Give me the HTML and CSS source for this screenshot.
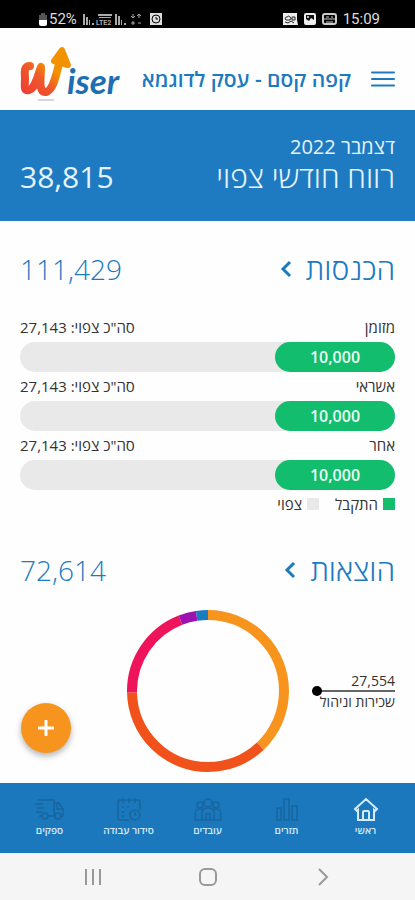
FILE: index.html
```html
<!DOCTYPE html>
<html lang="he" dir="rtl">
<head>
    <meta charset="UTF-8">
    <meta name="viewport" content="width=device-width, initial-scale=1.0">
    <title>Wiser</title>
    <link rel="stylesheet" href="styles.css">
</head>
<body>
    <div class="status-bar">
        <div class="status-group">
            <svg width="10" height="13" viewBox="0 0 10 13"><path d="M3 0h4v2h2v5H1V2h2z" fill="#555"/><path d="M1 7h8v4q0 2-2 2H3q-2 0-2-2z" fill="#fff"/></svg>
            <span>52%</span>
            <svg class="status-signal" width="62" height="14" viewBox="0 0 62 14">
                <g fill="#aaa">
                    <path d="M0 2h2v11H0zM3 5h2v8H3zM6 8h1v5H6zM9 11h2v2H9z"/>
                    <path d="M15 2h14v2H15zM16 5h12v1H16z"/>
                    <path d="M32 2h2v11h-2zM35 4h2v9h-2zM38 8h1v5h-1zM41 11h2v2h-2z"/>
                </g>
                <text x="13" y="13" class="status-tiny">LTE2</text>
                <path d="M50 2v4M48 4l2 2 2-2M56 6V2M54 4l2-2 2 2M50 9v4M48 11h4M55 11h3" stroke="#aaa" fill="none"/>
            </svg>
            <svg class="status-alarm" width="12" height="12" viewBox="0 0 12 12"><path d="M0 0h12v12H0z" fill="#ddd"/><circle cx="6" cy="6" r="4" fill="none" stroke="#000"/><path d="M6 4v2h2" stroke="#000" fill="none"/></svg>
        </div>
        <div class="status-group">
            <svg width="15" height="12" viewBox="0 0 15 12"><path d="M0 0h14v7l1 5H0z" fill="#eee"/><path d="M3 7q-2-3 1-3 2-2 3 0 2 1 0 3zM9 4h3v3H9zM2 9l3 1 3-2 3 2" fill="none" stroke="#222"/></svg>
            <svg width="12" height="12" viewBox="0 0 12 12"><rect width="12" height="12" rx="2" fill="#eee"/><path d="M2 2h8v5L7 5 5 8 2 6z" fill="#111"/><circle cx="4" cy="4" r="1" fill="#eee"/></svg>
            <svg width="15" height="12" viewBox="0 0 15 12"><rect x="1" y="1" width="13" height="10" rx="2" fill="none" stroke="#ccc" stroke-width="2"/><path d="M2 6h11M4 4h3M9 4h2M4 9h7" stroke="#ccc"/></svg>
            <span>15:09</span>
        </div>
    </div>

    <header class="header">
        <button class="menu-button" aria-label="תפריט">
            <svg width="24" height="16" viewBox="0 0 24 16"><path d="M1 1.5h22M1 8h22M1 14.5h22" stroke="#1c7abf" stroke-width="2" stroke-linecap="round"/></svg>
        </button>
        <h1 class="business">קפה קסם - עסק לדוגמא</h1>
        <a class="logo" href="#" aria-label="Wiser">
            <svg width="102" height="56" viewBox="0 0 102 56">
                <defs>
                    <linearGradient id="flame" x1="0" y1="1" x2="1" y2="0">
                        <stop offset="0" stop-color="#ee4035"/>
                        <stop offset="0.45" stop-color="#f05a28"/>
                        <stop offset="0.75" stop-color="#f39200"/>
                    </linearGradient>
                </defs>
                <path d="M18 54h16" stroke="#d6d6d6" stroke-width="2"/>
                <path d="M10 20C3 20 5 27 5 33C5 40 3 45 9 44C16 42 18 28 21 21C21 32 18 47 26 46C34 44 36 28 40 14" fill="none" stroke="url(#flame)" stroke-width="8" stroke-linecap="round" stroke-linejoin="round"/>
                <path d="M42 4L34 15L48 19Z" fill="#f39200" stroke="#f39200" stroke-width="6" stroke-linejoin="round"/>
                <text x="47" y="48" class="logo-text">iser</text>
            </svg>
        </a>
    </header>

    <section class="profit">
        <p class="profit-month">דצמבר 2022</p>
        <div class="profit-row">
            <h2>רווח חודשי צפוי</h2>
            <span>38,815</span>
        </div>
    </section>

    <main class="content">
        <section class="income">
            <div class="section-title">
                <h2><a href="#">הכנסות
                    <svg width="12" height="18" viewBox="0 0 12 18"><path d="M10 2L3 9l7 7" fill="none" stroke="#1c7abf" stroke-width="3"/></svg>
                </a></h2>
                <span>111,429</span>
            </div>
            <div class="source">
                <div class="source-label"><span>מזומן</span><span>סה"כ צפוי: 27,143</span></div>
                <div class="bar"><div class="bar-fill" style="width: 32%">10,000</div></div>
            </div>
            <div class="source">
                <div class="source-label"><span>אשראי</span><span>סה"כ צפוי: 27,143</span></div>
                <div class="bar"><div class="bar-fill" style="width: 32%">10,000</div></div>
            </div>
            <div class="source">
                <div class="source-label"><span>אחר</span><span>סה"כ צפוי: 27,143</span></div>
                <div class="bar"><div class="bar-fill" style="width: 32%">10,000</div></div>
            </div>
            <div class="legend">
                <span class="legend-item received">התקבל</span>
                <span class="legend-item expected">צפוי</span>
            </div>
        </section>

        <section class="expenses">
            <div class="section-title">
                <h2><a href="#">הוצאות
                    <svg width="12" height="18" viewBox="0 0 12 18"><path d="M10 2L3 9l7 7" fill="none" stroke="#1c7abf" stroke-width="3"/></svg>
                </a></h2>
                <span>72,614</span>
            </div>
            <div class="chart">
                <div class="callout">
                    <span>27,554</span>
                    <div class="callout-line"></div>
                    <span>שכירות וניהול</span>
                </div>
                <svg class="donut" width="162" height="162" viewBox="0 0 162 162">
                    <g fill="none" stroke-width="10" transform="rotate(-90 81 81)">
                        <circle cx="81" cy="81" r="76" pathLength="1000" stroke="#f7941d" stroke-dasharray="379 621"/>
                        <circle cx="81" cy="81" r="76" pathLength="1000" stroke="#f1511b" stroke-dasharray="368 632" stroke-dashoffset="-379"/>
                        <circle cx="81" cy="81" r="76" pathLength="1000" stroke="#ed145b" stroke-dasharray="194 806" stroke-dashoffset="-747"/>
                        <circle cx="81" cy="81" r="76" pathLength="1000" stroke="#9c12b0" stroke-dasharray="35 965" stroke-dashoffset="-941"/>
                        <circle cx="81" cy="81" r="76" pathLength="1000" stroke="#1c7abf" stroke-dasharray="24 976" stroke-dashoffset="-976"/>
                    </g>
                </svg>
            </div>
        </section>
    </main>

    <div class="bottom">
        <button class="add-button" aria-label="הוספה">
            <svg width="16" height="16" viewBox="0 0 16 16"><path d="M8 1v14M1 8h14" stroke="#fff" stroke-width="3" stroke-linecap="round"/></svg>
        </button>
        <nav class="tabs">
            <a class="tab active" href="#">
                <svg width="26" height="26" viewBox="0 0 26 26"><path d="M2 13L13 3l11 10-2 2-1-1v10H5V14l-1 1zM10 24v-8q0-1 1-1h4q1 0 1 1v8"/></svg>
                ראשי
            </a>
            <a class="tab" href="#">
                <svg width="26" height="26" viewBox="0 0 26 26"><path d="M3 12h4v12H3zM10 3h5v21h-5zM18 10h5v14h-5z"/></svg>
                תזרים
            </a>
            <a class="tab" href="#">
                <svg width="28" height="26" viewBox="0 0 28 26"><circle cx="14" cy="7" r="4"/><circle cx="6" cy="9" r="3"/><circle cx="22" cy="9" r="3"/><path d="M8 24v-7q0-5 6-5t6 5v7zM8 24H1v-6q0-5 5-5 2 0 3 1M20 24h7v-6q0-5-5-5-2 0-3 1M12 24v-6h4v6"/></svg>
                עובדים
            </a>
            <a class="tab" href="#">
                <svg width="26" height="26" viewBox="0 0 26 26"><path d="M13 24H4q-2 0-2-2V6q0-2 2-2h18q2 0 2 2v8M7 2v5M13 2v5M19 2v5M6 11h2M11 11h2M6 16h2M6 20h2"/><circle cx="19" cy="19" r="5"/><path d="M19 16v3h2"/></svg>
                סידור עבודה
            </a>
            <a class="tab" href="#">
                <svg width="30" height="26" viewBox="0 0 30 26"><path d="M3 4h16v16h-5M19 7h5l4 6v7h-2M20 20h-1M22 8v5h6M7 20H4M0 8h8M2 12h7M1 16h6"/><circle cx="10" cy="20" r="3"/><circle cx="23" cy="20" r="3"/></svg>
                ספקים
            </a>
        </nav>
    </div>

    <div class="system-nav">
        <button aria-label="אחרונים"><svg width="18" height="18" viewBox="0 0 18 18"><path d="M2 1v16M9 1v16M16 1v16"/></svg></button>
        <button aria-label="בית"><svg width="18" height="18" viewBox="0 0 18 18"><rect x="1" y="1" width="16" height="16" rx="5"/></svg></button>
        <button aria-label="חזרה"><svg width="18" height="18" viewBox="0 0 18 18"><path d="M5 1l8 8-8 8"/></svg></button>
    </div>
</body>
</html>
```

FILE: styles.css
```css
* {
    box-sizing: border-box;
    margin: 0;
    padding: 0;
}

body {
    display: flex;
    flex-direction: column;
    min-height: 100vh;
    background-color: #fefefe;
    color: #333;
    font-family: 'Open Sans', 'Liberation Sans', sans-serif;
}

svg {
    display: block;
}

a {
    color: inherit;
    text-decoration: none;
}

button {
    border: none;
    background: none;
    cursor: pointer;
}

.status-bar {
    direction: ltr;
    display: flex;
    justify-content: space-between;
    height: 28px;
    padding: 10px 35px 0 38px;
    background-color: #000;
    color: #ddd;
    font-family: Roboto, sans-serif;
    font-size: 15px;
    line-height: 18px;
}

.status-group {
    display: flex;
    align-items: center;
    height: 18px;
    gap: 6px;
}

.status-group:first-child {
    gap: 1px;
}

.status-signal {
    margin-left: 5px;
}

.status-alarm {
    margin-left: 4px;
}

.status-tiny {
    font-size: 7px;
    font-weight: bold;
    fill: #aaa;
}

.header {
    display: flex;
    align-items: center;
    height: 82px;
    padding: 0 20px;
    color: #1c7abf;
}

.menu-button {
    margin-top: 20px;
}

.business {
    margin: 20px 20px 0 0;
    font-size: 21px;
    font-weight: 600;
    line-height: 28px;
    white-space: nowrap;
}

.logo {
    margin-right: auto;
    margin-top: 10px;
}

.logo svg {
    overflow: visible;
}

.logo-text {
    direction: ltr;
    font-family: Lato, sans-serif;
    font-size: 35px;
    font-style: italic;
    font-weight: bold;
    fill: #1c6fb3;
}

.profit {
    padding: 24px 20px 28px;
    background-color: #1e7bc1;
    color: #e6f3fc;
}

.profit-month {
    font-size: 20px;
    line-height: 26px;
}

.profit-row {
    display: flex;
    align-items: center;
    justify-content: space-between;
    font-size: 30px;
    line-height: 33px;
}

.profit-row h2,
.section-title h2 {
    font-size: 30px;
    font-weight: 300;
}

.content {
    flex: 1;
    padding: 28px 20px 11px;
}

.section-title {
    display: flex;
    align-items: center;
    justify-content: space-between;
    color: #1c7abf;
    font-size: 28px;
    font-weight: 300;
    line-height: 40px;
}

.section-title a {
    display: flex;
    align-items: center;
    gap: 14px;
}

.income .section-title {
    margin-bottom: 28px;
}

.source {
    margin-bottom: 4px;
}

.source-label {
    display: flex;
    justify-content: space-between;
    font-size: 15px;
    line-height: 20px;
    margin-bottom: 5px;
}

.bar {
    height: 30px;
    border-radius: 15px;
    background-color: #e9e9e9;
}

.bar-fill {
    height: 100%;
    border-radius: 15px;
    background-color: #12bd6d;
    color: #e9fff4;
    font-size: 16px;
    font-weight: 600;
    line-height: 30px;
    text-align: center;
}

.legend {
    display: flex;
    gap: 16px;
    font-size: 15px;
    line-height: 20px;
}

.legend-item {
    display: flex;
    align-items: center;
    gap: 5px;
}

.legend-item::before {
    content: "";
    width: 12px;
    height: 12px;
    background-color: #12bd6d;
}

.expected::before {
    background-color: #e9e9e9;
}

.expenses {
    margin-top: 36px;
}

.chart {
    display: grid;
    grid-template-columns: 1fr auto 1fr;
    align-items: center;
    margin-top: 20px;
}

.callout {
    justify-self: start;
    font-size: 14px;
    line-height: 19px;
    white-space: nowrap;
}

.callout span {
    display: block;
}

.callout-line {
    position: relative;
    height: 2px;
    margin-left: -8px;
    background-color: #666;
}

.callout-line::after {
    content: "";
    position: absolute;
    left: 0;
    top: -4px;
    width: 10px;
    height: 10px;
    border-radius: 50%;
    background-color: #000;
}

.bottom {
    position: relative;
}

/* floats over the content, just above the tabs */
.add-button {
    position: absolute;
    left: 21px;
    bottom: 100px;
    display: flex;
    align-items: center;
    justify-content: center;
    width: 50px;
    height: 50px;
    border-radius: 50%;
    background-color: #f7941d;
    box-shadow: 0 3px 6px rgba(0, 0, 0, 0.3);
}

.tabs {
    display: flex;
    height: 70px;
    padding: 13px 10px 0;
    background-color: #1c78bd;
}

.tab {
    flex: 1;
    display: flex;
    flex-direction: column;
    align-items: center;
    color: #d5ebfa;
    font-size: 10px;
    font-weight: 600;
    line-height: 16px;
    white-space: nowrap;
}

.tab svg {
    fill: none;
    stroke: #17659f;
    stroke-width: 1.5;
}

.tab.active svg {
    stroke: #d5ebfa;
    stroke-width: 2;
}

.system-nav {
    direction: ltr;
    display: flex;
    height: 48px;
    padding: 0 35px;
    background-color: #f5f5f5;
}

.system-nav button {
    flex: 1;
    display: flex;
    align-items: center;
    justify-content: center;
}

.system-nav svg {
    fill: none;
    stroke: #999;
    stroke-width: 2;
}
```
